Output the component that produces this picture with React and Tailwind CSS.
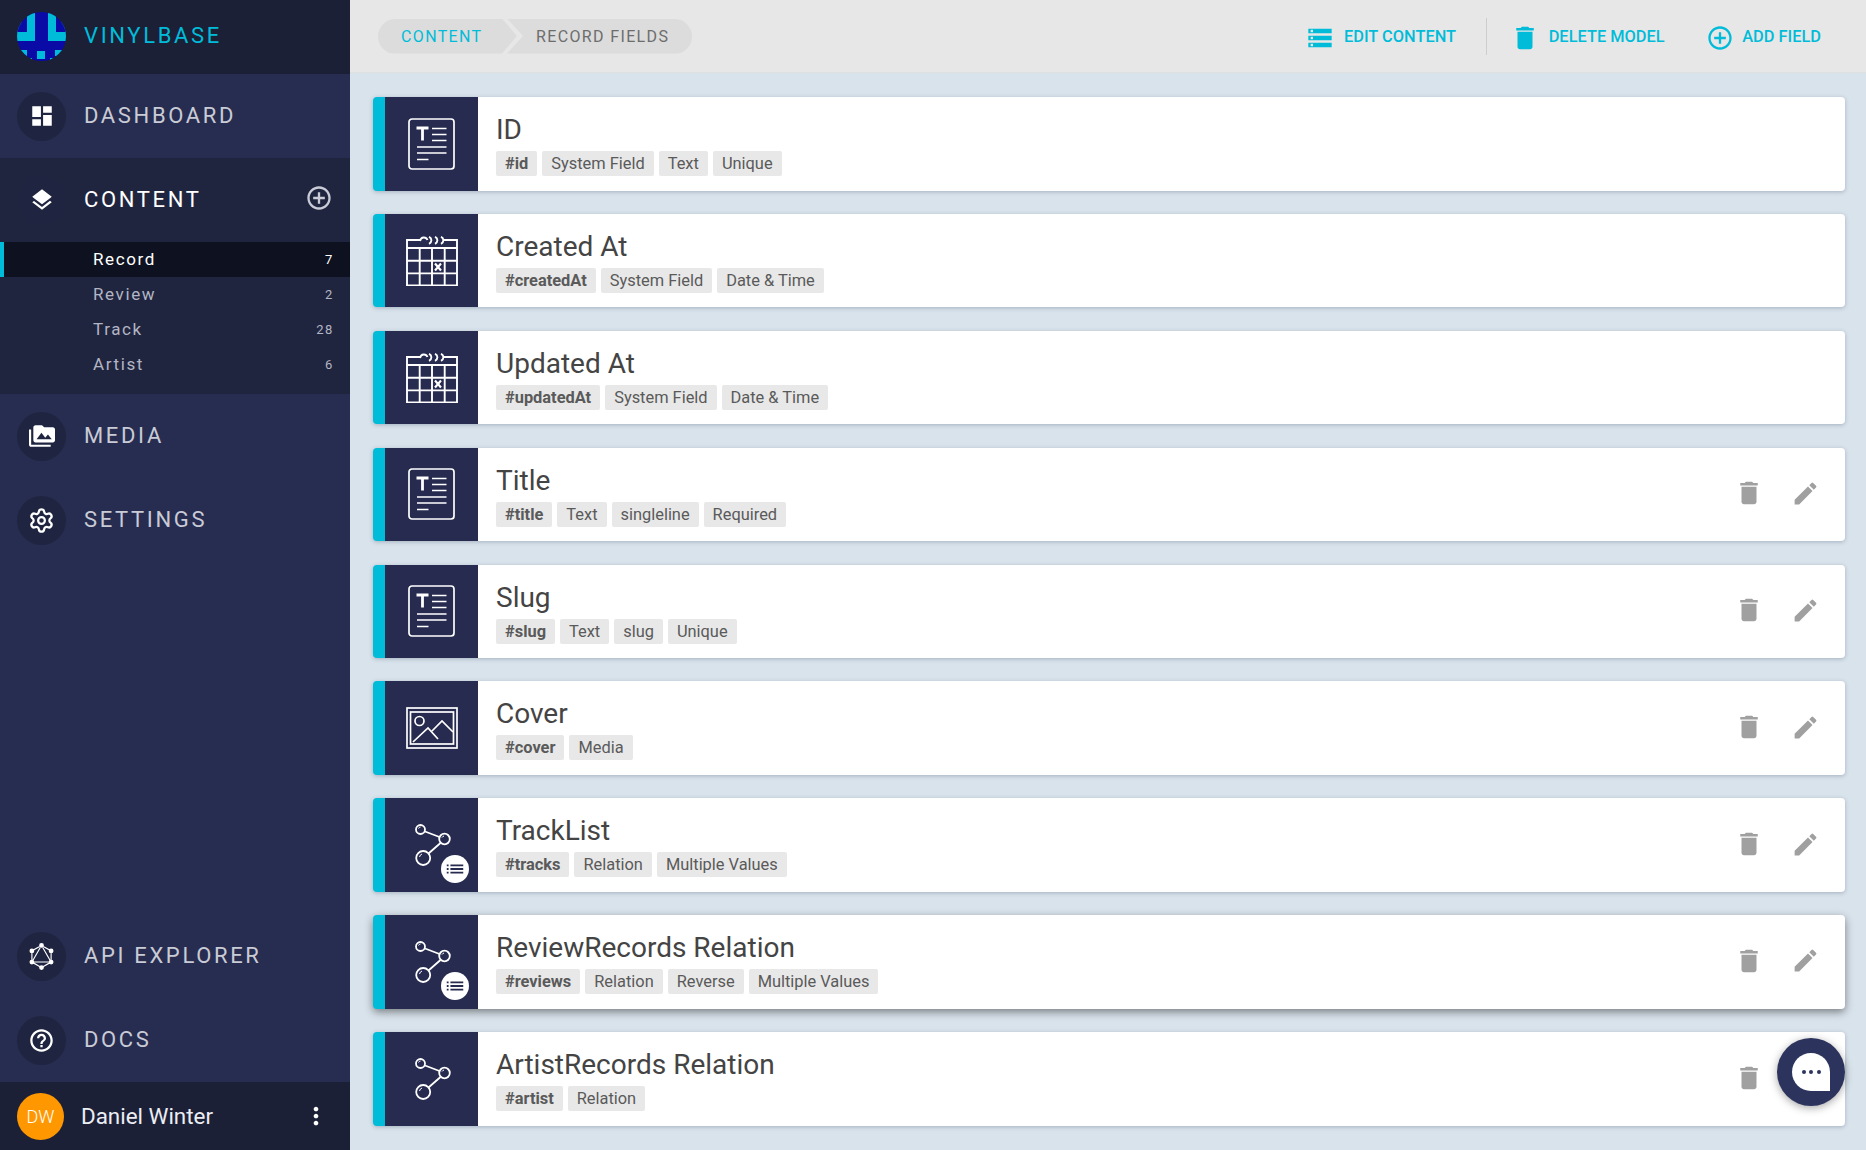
import {
  MdDashboard,
  MdLayers,
  MdPermMedia,
  MdHelpOutline,
  MdDelete,
  MdEdit,
  MdMoreVert,
  MdAddCircleOutline,
  MdStorage,
  MdList,
} from 'react-icons/md'
import { SiGraphql } from 'react-icons/si'
import { Settings } from 'lucide-react'

const MODELS = [
  { name: 'Record', count: 7, active: true },
  { name: 'Review', count: 2 },
  { name: 'Track', count: 28 },
  { name: 'Artist', count: 6 },
]

const FIELDS = [
  { title: 'ID', icon: 'text', tags: ['#id', 'System Field', 'Text', 'Unique'], system: true },
  { title: 'Created At', icon: 'date', tags: ['#createdAt', 'System Field', 'Date & Time'], system: true },
  { title: 'Updated At', icon: 'date', tags: ['#updatedAt', 'System Field', 'Date & Time'], system: true },
  { title: 'Title', icon: 'text', tags: ['#title', 'Text', 'singleline', 'Required'] },
  { title: 'Slug', icon: 'text', tags: ['#slug', 'Text', 'slug', 'Unique'] },
  { title: 'Cover', icon: 'media', tags: ['#cover', 'Media'] },
  { title: 'TrackList', icon: 'relationMany', tags: ['#tracks', 'Relation', 'Multiple Values'] },
  { title: 'ReviewRecords Relation', icon: 'relationMany', tags: ['#reviews', 'Relation', 'Reverse', 'Multiple Values'], hovered: true },
  { title: 'ArtistRecords Relation', icon: 'relation', tags: ['#artist', 'Relation'] },
]

function Logo() {
  return (
    <svg width="49" height="49" viewBox="0 0 49 49" className="shrink-0">
      <defs>
        <clipPath id="logo-clip">
          <circle cx="24.5" cy="24.5" r="24.5" />
        </clipPath>
      </defs>
      <g clipPath="url(#logo-clip)">
        <rect width="49" height="49" fill="#0a0aa6" />
        <path d="M0 10h9v10H0zM10 0h8v29H0v-9h10zM31 0h8v20h10v9H31zM40 10h9v10h-9z" fill="#00bcd9" />
        <rect x="0" y="9" width="9" height="11" fill="#0a0aa6" />
        <rect x="40" y="9" width="9" height="11" fill="#0a0aa6" />
        <rect x="20" y="39" width="8" height="8" fill="#00bcd9" />
        <rect x="38" y="38" width="7" height="6" fill="#00bcd9" />
        <rect x="3" y="38" width="7" height="6" fill="#00bcd9" />
        <rect x="9" y="46" width="6" height="3" fill="#00bcd9" />
        <rect x="33" y="46" width="6" height="3" fill="#00bcd9" />
      </g>
    </svg>
  )
}

function NavItem({ icon: Icon, label, iconSize = 26, active, children }) {
  return (
    <div className={`flex items-center h-[84px] pl-[17px] pr-[17.5px] shrink-0 ${active ? 'bg-[#20253f]' : 'bg-[#272d50]'}`}>
      <div className="w-[49px] h-[49px] rounded-full flex items-center justify-center text-white shrink-0 bg-[#1f2540]">
        <Icon size={iconSize} />
      </div>
      <span className={`ml-[18px] mb-[2px] text-[22px] tracking-[2.65px] flex-1 ${active ? 'text-white' : 'text-[#c9cbd6]'}`}>{label}</span>
      {children}
    </div>
  )
}

function Sidebar() {
  return (
    <aside className="w-[350px] shrink-0 h-[1150px] flex flex-col bg-[#272d50]">
      <div className="h-[74px] shrink-0 bg-[#1c2037] flex items-center pl-[17px] pb-[1px]">
        <Logo />
        <span className="ml-[18px] mb-[2px] text-[22px] tracking-[2.65px] text-[#00bcd9]">VINYLBASE</span>
      </div>
      <NavItem icon={MdDashboard} label="DASHBOARD" />
      <NavItem icon={MdLayers} label="CONTENT" active>
        <MdAddCircleOutline size={28} className="text-[#c9cbd6] mb-[5px]" />
      </NavItem>
      <div className="bg-[#20253f] h-[152px] shrink-0">
        {MODELS.map((m) => (
          <div
            key={m.name}
            className={`h-[35px] flex items-center pl-[89px] pr-[16px] text-[17px] tracking-[0.095em] border-l-[4px] ${
              m.active ? 'bg-[#0e1220] text-white border-[#00bcd9]' : 'text-[#b3b5c4] border-transparent'
            }`}
          >
            <span className="flex-1">{m.name}</span>
            <span className="text-[13px]">{m.count}</span>
          </div>
        ))}
      </div>
      <NavItem icon={MdPermMedia} label="MEDIA" />
      <NavItem icon={Settings} label="SETTINGS" iconSize={27} />
      <div className="flex-1" />
      <NavItem icon={SiGraphql} label="API EXPLORER" iconSize={27} />
      <NavItem icon={MdHelpOutline} label="DOCS" iconSize={27} />
      <div className="h-[68px] shrink-0 bg-[#1c2037] flex items-center pl-[17px] pr-[20px]">
        <div className="w-[47px] h-[47px] rounded-full bg-[#ff9800] text-white text-[18px] font-light flex items-center justify-center">DW</div>
        <span className="ml-[17px] pt-[1px] flex-1 text-[22.4px] text-[#eceef3]">Daniel Winter</span>
        <MdMoreVert size={28} className="text-white" />
      </div>
    </aside>
  )
}

function TextIcon() {
  return (
    <svg width="47" height="52" viewBox="0 0 47 52" fill="none" stroke="white" strokeWidth="1.7">
      <rect x="1" y="1" width="45" height="50" rx="3" />
      <path d="M8.5 10h12M14.5 10v12.5" strokeWidth="2.8" />
      <path d="M24 10.5h14.5M24 16.5h14.5M24 22.5h14.5M9 29h29.5M9 35h29.5M9 41.5h11.5" />
    </svg>
  )
}

function DateIcon() {
  return (
    <svg width="52" height="50" viewBox="0 0 52 50" fill="none" stroke="white" strokeWidth="1.9">
      <path d="M15 4H1v45.5h50V4H38M1 12h50M1 24.8h50M1 37.4h50M13.7 12v37.5M26 12v37.5M38.7 12v37.5" />
      <path d="M14 5c1-4.5 6-4.5 7.5-1M23 .8c3.2 1.5 3.2 5.5 0 7M29 .8c3.2 1.5 3.2 5.5 0 7M35 .8c3.2 1.5 3.2 5.5 0 7" />
      <path d="M29 27.5l6 7M35 27.5l-6 7" strokeWidth="2.2" />
    </svg>
  )
}

function MediaIcon() {
  return (
    <svg width="52" height="42" viewBox="0 0 52 42" fill="none" stroke="white" strokeWidth="1.7">
      <rect x="1" y="1" width="50" height="40" />
      <rect x="4.5" y="5" width="43" height="32" />
      <circle cx="13.5" cy="14" r="4.5" />
      <path d="M7 35l15-14 10 11M26 24l10-10 11 11" />
    </svg>
  )
}

function RelationIcon() {
  return (
    <svg width="36" height="42" viewBox="0 0 36 42" fill="none" stroke="white" strokeWidth="1.8" className="ml-[3px]">
      <circle cx="5.5" cy="5.5" r="4.5" />
      <circle cx="29.5" cy="15" r="5.3" />
      <circle cx="8.2" cy="34" r="7" />
      <path d="M10 7.5l14.5 5.5M25.5 19L13.5 29.5" />
      <path d="M3.5 4.5a2.5 2.5 0 0 1 2-1.5M27 13.5a3 3 0 0 1 2-1.5M4.5 33a4 4 0 0 1 2.5-3" strokeWidth="1" />
    </svg>
  )
}

function FieldIcon({ kind }) {
  return (
    <div className="relative w-[93px] shrink-0 bg-[#262b4f] flex items-center justify-center">
      {kind === 'text' && <TextIcon />}
      {kind === 'date' && <DateIcon />}
      {kind === 'media' && <MediaIcon />}
      {(kind === 'relation' || kind === 'relationMany') && <RelationIcon />}
      {kind === 'relationMany' && (
        <div className="absolute left-[56px] top-[57px] w-[28px] h-[28px] rounded-full bg-white flex items-center justify-center text-[#262b4f]">
          <MdList size={22} />
        </div>
      )}
    </div>
  )
}

function FieldCard({ field }) {
  return (
    <div
      className={`h-[93.5px] flex rounded-[4px] overflow-hidden bg-white shrink-0 border-l-[12px] border-[#00bcd9] ${
        field.hovered ? 'shadow-[0_3px_8px_rgba(0,0,0,0.45)]' : 'shadow-[0_1px_4px_rgba(40,60,90,0.3)]'
      }`}
    >
      <FieldIcon kind={field.icon} />
      <div className="flex-1 pl-[18px] pt-[16px]">
        <div className="text-[28px] leading-[33px] text-[#444]">{field.title}</div>
        <div className="flex gap-[5px] mt-[5px]">
          {field.tags.map((tag, i) => (
            <span key={tag} className={`h-[25px] px-[9px] rounded-[2px] bg-[#e8e8e8] text-[16.4px] leading-[25px] text-[#5a5a5a] ${i === 0 ? 'font-bold' : ''}`}>
              {tag}
            </span>
          ))}
        </div>
      </div>
      {!field.system && (
        <div className="flex items-center gap-[26.5px] pr-[25.5px] pb-[2px] text-[#a0a0a0]">
          <MdDelete size={30} />
          <MdEdit size={29} />
        </div>
      )}
    </div>
  )
}

function Header() {
  return (
    <header className="h-[73px] shrink-0 bg-[#e7e7e7] border-b border-[#dfe0e0] flex items-center justify-between pl-[28px] pr-[45px]">
      <div className="flex h-[35px] text-[16px] tracking-[0.085em]">
        <div className="w-[139px] pl-[23px] pt-[2px] flex items-center rounded-l-full bg-[#dcdcdc] text-[#00bcd9] [clip-path:polygon(0_0,124px_0,139px_50%,124px_100%,0_100%)]">
          CONTENT
        </div>
        <div className="-ml-[10px] w-[185px] pl-[29px] pt-[2px] flex items-center rounded-r-full bg-[#dcdcdc] text-[#6d6d6d] [clip-path:polygon(0_0,100%_0,100%_100%,0_100%,16px_50%)]">
          RECORD FIELDS
        </div>
      </div>
      <div className="flex items-center text-[#00bcd9] text-[16.4px] font-medium h-[37px] pt-[3px]">
        <MdStorage size={28} />
        <span className="ml-[10px]">EDIT CONTENT</span>
        <div className="w-px h-[37px] bg-[#cdcdcd] ml-[29.6px] mr-[23px] -mt-[3px]" />
        <MdDelete size={30} />
        <span className="ml-[9px]">DELETE MODEL</span>
        <MdAddCircleOutline size={28} className="ml-[41px]" />
        <span className="ml-[8.5px]">ADD FIELD</span>
      </div>
    </header>
  )
}

export default function App() {
  return (
    <div className="relative flex w-[1866px] h-[1150px] overflow-hidden font-['Roboto',sans-serif] bg-[#d9e3ec]">
      <Sidebar />
      <main className="flex-1 flex flex-col">
        <Header />
        <div className="flex flex-col gap-[23.4px] pt-[24px] pl-[23px] pr-[21px]">
          {FIELDS.map((f) => (
            <FieldCard key={f.title} field={f} />
          ))}
        </div>
      </main>
      <div className="absolute left-[1777px] top-[1038px] w-[68px] h-[68px] rounded-full bg-[#2c345e] flex items-center justify-center shadow-[0_2px_8px_rgba(0,0,0,0.35)]">
        <div className="w-[38px] h-[38px] rounded-full rounded-br-[3px] bg-white flex items-center justify-center gap-[3.5px]">
          <span className="w-[4px] h-[4px] rounded-full bg-[#2c345e]" />
          <span className="w-[4px] h-[4px] rounded-full bg-[#2c345e]" />
          <span className="w-[4px] h-[4px] rounded-full bg-[#2c345e]" />
        </div>
      </div>
    </div>
  )
}
